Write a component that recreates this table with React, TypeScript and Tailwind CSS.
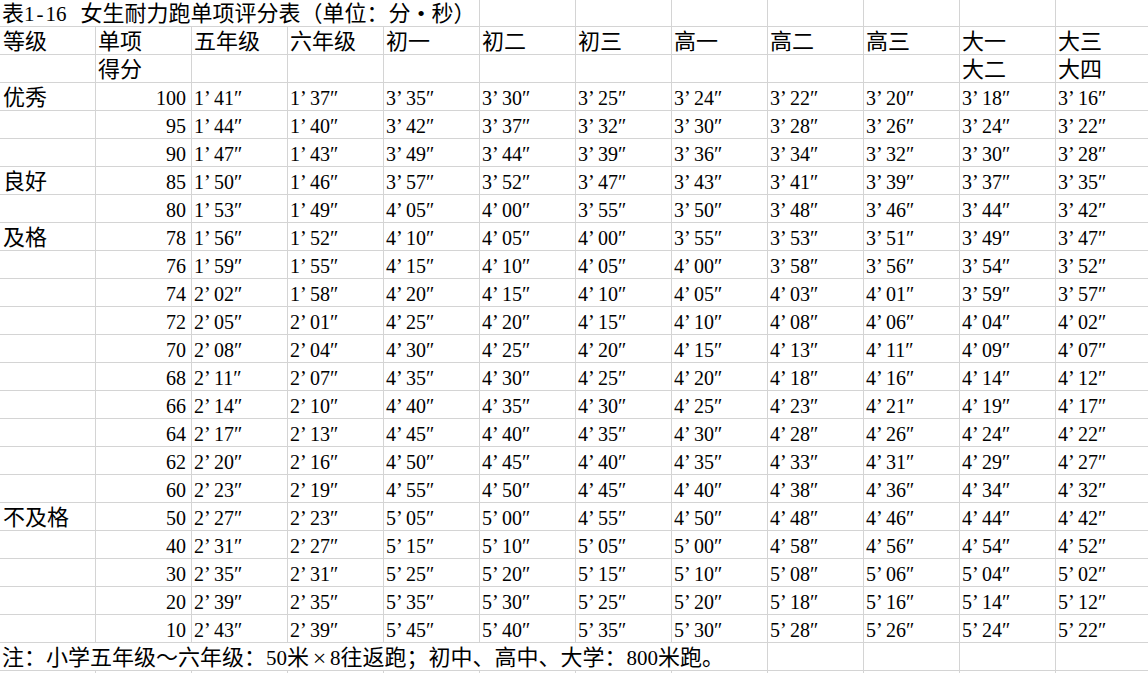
import React from 'react';

const grades = ['五年级', '六年级', '初一', '初二', '初三', '高一', '高二', '高三'];

const rows: { level?: string; score: number; times: string[] }[] = [
  { level: '优秀', score: 100, times: ['1 41', '1 37', '3 35', '3 30', '3 25', '3 24', '3 22', '3 20', '3 18', '3 16'] },
  { score: 95, times: ['1 44', '1 40', '3 42', '3 37', '3 32', '3 30', '3 28', '3 26', '3 24', '3 22'] },
  { score: 90, times: ['1 47', '1 43', '3 49', '3 44', '3 39', '3 36', '3 34', '3 32', '3 30', '3 28'] },
  { level: '良好', score: 85, times: ['1 50', '1 46', '3 57', '3 52', '3 47', '3 43', '3 41', '3 39', '3 37', '3 35'] },
  { score: 80, times: ['1 53', '1 49', '4 05', '4 00', '3 55', '3 50', '3 48', '3 46', '3 44', '3 42'] },
  { level: '及格', score: 78, times: ['1 56', '1 52', '4 10', '4 05', '4 00', '3 55', '3 53', '3 51', '3 49', '3 47'] },
  { score: 76, times: ['1 59', '1 55', '4 15', '4 10', '4 05', '4 00', '3 58', '3 56', '3 54', '3 52'] },
  { score: 74, times: ['2 02', '1 58', '4 20', '4 15', '4 10', '4 05', '4 03', '4 01', '3 59', '3 57'] },
  { score: 72, times: ['2 05', '2 01', '4 25', '4 20', '4 15', '4 10', '4 08', '4 06', '4 04', '4 02'] },
  { score: 70, times: ['2 08', '2 04', '4 30', '4 25', '4 20', '4 15', '4 13', '4 11', '4 09', '4 07'] },
  { score: 68, times: ['2 11', '2 07', '4 35', '4 30', '4 25', '4 20', '4 18', '4 16', '4 14', '4 12'] },
  { score: 66, times: ['2 14', '2 10', '4 40', '4 35', '4 30', '4 25', '4 23', '4 21', '4 19', '4 17'] },
  { score: 64, times: ['2 17', '2 13', '4 45', '4 40', '4 35', '4 30', '4 28', '4 26', '4 24', '4 22'] },
  { score: 62, times: ['2 20', '2 16', '4 50', '4 45', '4 40', '4 35', '4 33', '4 31', '4 29', '4 27'] },
  { score: 60, times: ['2 23', '2 19', '4 55', '4 50', '4 45', '4 40', '4 38', '4 36', '4 34', '4 32'] },
  { level: '不及格', score: 50, times: ['2 27', '2 23', '5 05', '5 00', '4 55', '4 50', '4 48', '4 46', '4 44', '4 42'] },
  { score: 40, times: ['2 31', '2 27', '5 15', '5 10', '5 05', '5 00', '4 58', '4 56', '4 54', '4 52'] },
  { score: 30, times: ['2 35', '2 31', '5 25', '5 20', '5 15', '5 10', '5 08', '5 06', '5 04', '5 02'] },
  { score: 20, times: ['2 39', '2 35', '5 35', '5 30', '5 25', '5 20', '5 18', '5 16', '5 14', '5 12'] },
  { score: 10, times: ['2 43', '2 39', '5 45', '5 40', '5 35', '5 30', '5 28', '5 26', '5 24', '5 22'] },
];

// one spreadsheet cell: 96px wide, grid line on right and bottom, text sits at the bottom
const cell = 'shrink-0 w-[96px] h-[28px] border-r border-b border-[#d4d4d4] flex items-end pl-[2px] pb-[1px] whitespace-nowrap';
const titleCell = 'shrink-0 w-[96px] h-[27px] border-r border-b border-[#d4d4d4]';

function Time({ value }: { value: string }) {
  const [m, s] = value.split(' ');
  return (
    <span className="text-[20px]">
      {m}
      <span className="inline-block w-[10px]">’</span>
      {s}″
    </span>
  );
}

function Row({ children, h = 'h-[28px]' }: { children: React.ReactNode; h?: string }) {
  return <div className={`flex ${h}`}>{children}</div>;
}

export default function App() {
  return (
    <div
      lang="zh-CN"
      className="w-[1148px] h-[673px] overflow-hidden bg-white text-black text-[22px] leading-[22px]"
      style={{ fontFamily: '"Liberation Serif", "Noto Sans CJK SC", serif' }}
    >
      <div className="w-[1300px]">
        {/* title row, text runs over the first five columns */}
        <Row h="h-[27px]">
          <div className="shrink-0 w-[480px] h-[27px] border-r border-b border-[#d4d4d4] flex items-end pl-[2px] pb-[1px] whitespace-nowrap">
            <span>表</span>
            <span className="text-[21px]">
              1<span className="inline-block w-[11px] text-center">-</span>16
            </span>
            <span className="ml-[14px]">女生耐力跑单项评分表（单位：分</span>
            <span className="inline-block w-[21px] text-center">•</span>
            <span>秒）</span>
          </div>
          {[0, 1, 2, 3, 4, 5, 6].map((i) => (
            <div key={i} className={titleCell} />
          ))}
        </Row>

        {/* header */}
        <Row>
          <div className={`${cell} pl-[3px]`}>等级</div>
          <div className={cell}>单项</div>
          {grades.map((g) => (
            <div key={g} className={cell}>{g}</div>
          ))}
          <div className={cell}>大一</div>
          <div className={cell}>大三</div>
          <div className={cell} />
        </Row>
        <Row>
          <div className={cell} />
          <div className={cell}>得分</div>
          {grades.map((g) => (
            <div key={g} className={cell} />
          ))}
          <div className={cell}>大二</div>
          <div className={cell}>大四</div>
          <div className={cell} />
        </Row>

        {rows.map((r) => (
          <Row key={r.score}>
            <div className={`${cell} pl-[3px]`}>{r.level ?? ''}</div>
            <div className={`${cell} justify-end pr-[5px] text-[20px]`}>{r.score}</div>
            {r.times.map((t, i) => (
              <div key={i} className={cell}>
                <Time value={t} />
              </div>
            ))}
            <div className={cell} />
          </Row>
        ))}

        {/* note, spans the first eight columns */}
        <Row>
          <div className="shrink-0 w-[768px] h-[28px] border-r border-b border-[#d4d4d4] flex items-end pl-[2px] pb-[1px] whitespace-nowrap">
            <span>注：小学五年级～六年级：</span>
            <span className="text-[21px]">50</span>
            <span>米</span>
            <span className="inline-block w-[21px] text-center text-[24px]">×</span>
            <span className="text-[21px]">8</span>
            <span>往返跑；初中、高中、大学：</span>
            <span className="text-[21px]">800</span>
            <span>米跑。</span>
          </div>
          {[0, 1, 2, 3, 4].map((i) => (
            <div key={i} className={cell} />
          ))}
        </Row>
        <Row>
          {Array.from({ length: 13 }).map((_, i) => (
            <div key={i} className={cell} />
          ))}
        </Row>
      </div>
    </div>
  );
}
